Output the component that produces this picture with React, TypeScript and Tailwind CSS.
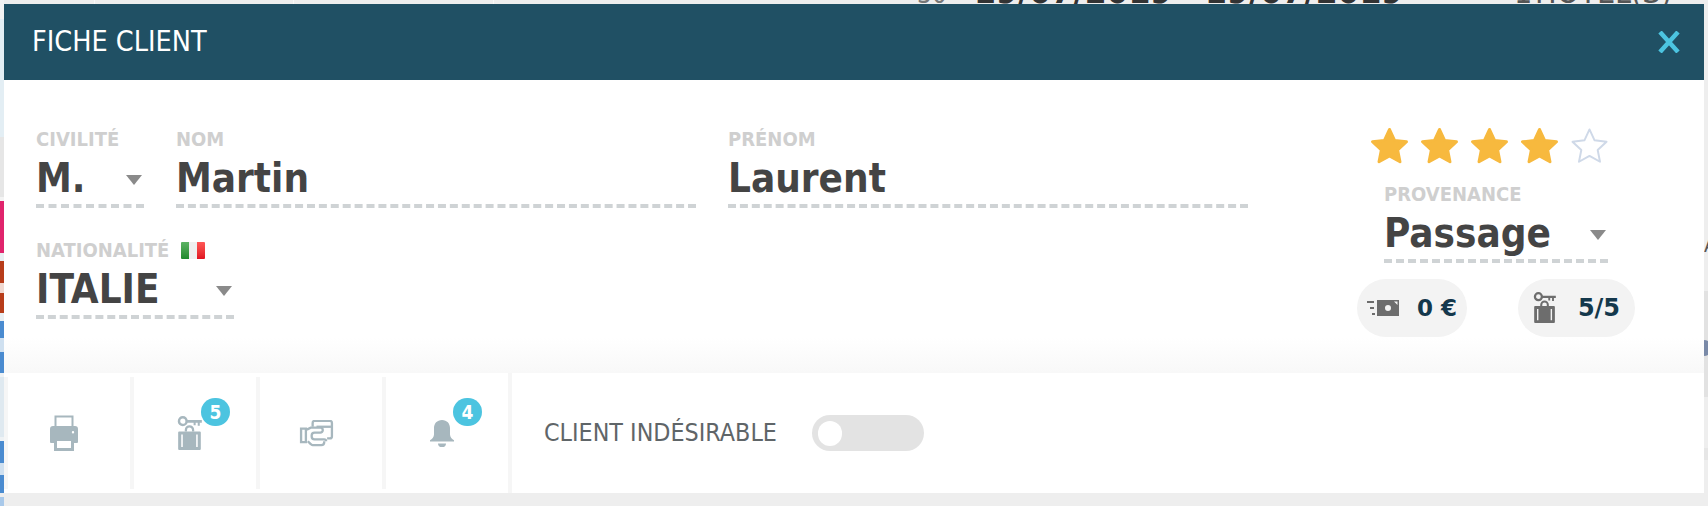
const font = "font-['DejaVu_Sans_Condensed','DejaVu_Sans',sans-serif]";

const leftStrip = [
  { h: "h-[19px]", c: "bg-[#f3f3f3]" },
  { h: "h-[118px]", c: "bg-[#e3eef4]" },
  { h: "h-[60px]", c: "bg-[#e6e6e6]" },
  { h: "h-[4px]", c: "bg-[#f4f4f4]" },
  { h: "h-[52px]", c: "bg-[#e0246c]" },
  { h: "h-[8px]", c: "bg-[#e8eef2]" },
  { h: "h-[22px]", c: "bg-[#b83d1a]" },
  { h: "h-[10px]", c: "bg-[#f0d8d0]" },
  { h: "h-[20px]", c: "bg-[#b83d1a]" },
  { h: "h-[8px]", c: "bg-[#e8eef2]" },
  { h: "h-[17px]", c: "bg-[#4a8bd0]" },
  { h: "h-[14px]", c: "bg-[#cfe0f0]" },
  { h: "h-[21px]", c: "bg-[#4a8bd0]" },
  { h: "h-[4px]", c: "bg-[#eef2f5]" },
  { h: "h-[60px]", c: "bg-[#dfe9f0]" },
  { h: "h-[4px]", c: "bg-[#eef2f5]" },
  { h: "h-[22px]", c: "bg-[#4a8bd0]" },
  { h: "h-[12px]", c: "bg-[#cfe0f0]" },
  { h: "h-[18px]", c: "bg-[#4a8bd0]" },
  { h: "h-[4px]", c: "bg-[#eeeeee]" },
  { h: "h-[9px]", c: "bg-[#a9c9ea]" },
];

function Caret() {
  return (
    <svg width="16" height="10" viewBox="0 0 16 10" className="shrink-0 mt-[3px]">
      <path d="M0 0h16L8 10z" fill="#8a8a8a" />
    </svg>
  );
}

function Field({
  label,
  value,
  width,
  caret,
  flag,
}: {
  label: string;
  value: string;
  width: string;
  caret?: boolean;
  flag?: boolean;
}) {
  return (
    <div className={`${width} shrink-0`}>
      <div className="flex items-center gap-[12px] h-[18px] text-[20px] font-bold leading-none text-[#cfcfcf]">
        {label}
        {flag && <ItalyFlag />}
      </div>
      <div className="flex items-center justify-between h-[60px] pt-[4px] pr-[2px] border-b-[4px] border-dashed border-[#cfd3d5] text-[40px] font-bold leading-none text-[#444444]">
        <span>{value}</span>
        {caret && <Caret />}
      </div>
    </div>
  );
}

function ItalyFlag() {
  return (
    <span className="flex w-[24px] h-[17px] overflow-hidden rounded-[1px]">
      <span className="flex-1 bg-gradient-to-b from-[#5cb364] to-[#1d8a2c]" />
      <span className="flex-1 bg-[#efefef]" />
      <span className="flex-1 bg-gradient-to-b from-[#f55] to-[#e01020]" />
    </span>
  );
}

function Star({ filled }: { filled: boolean }) {
  return (
    <svg width="39" height="37" viewBox="0 0 40 38">
      <path
        d="M20 2.500l5.200 11.200 12.300 1.500-9.100 8.400 2.400 12.100L20 29.700 9.200 35.700l2.400-12.100-9.100-8.400 12.300-1.500z"
        fill={filled ? "#f7b93e" : "#ffffff"}
        stroke={filled ? "#f7b93e" : "#cfd9e8"}
        strokeWidth={filled ? 3 : 2}
        strokeLinejoin="round"
      />
    </svg>
  );
}

function KeyBag({ color, width, height }: { color: string; width: number; height: number }) {
  return (
    <svg width={width} height={height} viewBox="0 0 25 34" className="shrink-0">
      <circle cx="5.500" cy="5" r="3.700" fill="none" stroke={color} strokeWidth="2.400" />
      <path d="M9 4h15v2.500h-2v3h-2v-3h-2v2.500h-2v-2.500H9z" fill={color} />
      <path d="M8.500 15v-1.500a3.500 3.500 0 0 1 7 0V15" fill="none" stroke={color} strokeWidth="2.200" />
      <path
        d="M2 15h20a1 1 0 0 1 1 1v16a1 1 0 0 1-1 1H2a1 1 0 0 1-1-1V16a1 1 0 0 1 1-1zm2 3v12h1.500V18zm14.500 0v12H20V18z"
        fill={color}
        fillRule="evenodd"
      />
    </svg>
  );
}

function CashIcon() {
  return (
    <svg width="32" height="16" viewBox="0 0 32 16" className="shrink-0">
      <path d="M0 1h7v2H0zM3 7h4v2H3zM5 13h3v2H5z" fill="#6d6d6d" />
      <path
        d="M10 0h22v16H10zm11 5a3 3 0 1 0 0 6 3 3 0 0 0 0-6zM27 1.500l3.500 3.500V1.500z"
        fill="#6d6d6d"
        fillRule="evenodd"
      />
    </svg>
  );
}

function Pill({ children, width, gap, text }: { children: React.ReactNode; width: string; gap: string; text: string }) {
  return (
    <div className={`${width} ${gap} ${text} h-[58px] flex items-center justify-center rounded-[29px] bg-[#f3f3f3] font-['DejaVu_Sans',sans-serif] font-bold text-[#14384c]`}>
      {children}
    </div>
  );
}

function PrinterIcon() {
  return (
    <svg width="30" height="36" viewBox="0 0 28 36">
      <path d="M5.500 13V1.500h17V13" fill="none" stroke="#a7b7be" strokeWidth="2" />
      <path
        d="M3 11h22a3 3 0 0 1 3 3v13a1 1 0 0 1-1 1h-3v8H4v-8H1a1 1 0 0 1-1-1V14a3 3 0 0 1 3-3zm4 15v7h14v-7zm16-10a1.200 1.200 0 1 0 0 2.400 1.200 1.200 0 0 0 0-2.400z"
        fill="#a7b7be"
        fillRule="evenodd"
      />
    </svg>
  );
}

function CardsIcon() {
  return (
    <svg width="35" height="27" viewBox="0 0 34 28" fill="none" stroke="#a7b7be" strokeWidth="2.400">
      <path d="M13 7V3a2 2 0 0 1 2-2h16a2 2 0 0 1 2 2v14a2 2 0 0 1-2 2h-3" />
      <path d="M17 7h15" />
      <path d="M7 10l4-2h10a2.500 2.500 0 0 1 0 5h-6a3 3 0 0 0-3 3v1a3 3 0 0 0 3 3h10a2 2 0 0 1 2 2" />
      <path d="M1 9h5v14H1zM8 22l3 3a3 3 0 0 0 2 1h9a3 3 0 0 0 3-3v-1" />
    </svg>
  );
}

function BellIcon() {
  return (
    <svg width="26" height="27" viewBox="0 0 26 30" preserveAspectRatio="none">
      <path d="M13 0c5 0 8 4 8 9v7c0 3 2 5 4 6.500V24H1v-1.500c2-1.500 4-3.500 4-6.500V9c0-5 3-9 8-9z" fill="#a7b7be" />
      <path d="M9 26h8a4 4 0 0 1-8 0z" fill="#a7b7be" />
    </svg>
  );
}

function Badge({ n }: { n: number }) {
  return (
    <span className="absolute left-[67px] top-[21px] w-[29px] h-[28px] rounded-full bg-[#4cc4e0] text-white text-[19px] font-bold flex items-center justify-center">
      {n}
    </span>
  );
}

function ToolCell({ children, tall }: { children: React.ReactNode; tall?: boolean }) {
  return (
    <div className={`relative w-[126px] shrink-0 pr-[10px] flex items-center justify-center border-r-[4px] border-[#f6f6f6] ${tall ? "" : "my-[4px]"}`}>
      {children}
    </div>
  );
}

export default function App() {
  return (
    <div className={`w-[1708px] h-[506px] overflow-hidden flex bg-[#eeeeee] ${font}`}>
      <div className="w-[4px] shrink-0 flex flex-col">
        {leftStrip.map((s, i) => (
          <div key={i} className={`${s.h} ${s.c}`} />
        ))}
      </div>

      <div className="w-[1700px] shrink-0 flex flex-col">
        {/* what sticks out above the modal */}
        <div className="h-[4px] shrink-0 overflow-hidden bg-[#eeeeee] relative">
          <span className="absolute left-[90px] top-0 w-[1px] h-[4px] bg-[#f8f8f8]" />
          <span className="absolute left-[289px] top-0 w-[1px] h-[4px] bg-[#f8f8f8]" />
          <span className="absolute left-[489px] top-0 w-[1px] h-[4px] bg-[#f8f8f8]" />
          <div className="absolute left-[913px] bottom-[-5px] flex items-baseline h-[35px] leading-[35px] text-[#333333]">
            <span className="w-[57px] text-[#777777] text-[26px]">30</span>
            <span className="w-[231px] text-[35px] font-bold">19/07/2019</span>
            <span className="w-[309px] text-[35px] font-bold">19/07/2019</span>
            <span className="w-[21px] text-[#555555] text-[32px]">1</span>
            <span className="text-[#555555] text-[32px]">HOTEL(S)</span>
          </div>
        </div>

        <div className="h-[76px] shrink-0 bg-[#205064] flex items-center justify-between pl-[28px] pr-[24px]">
          <h1 className="text-[28.500px] font-normal text-white">FICHE CLIENT</h1>
          <svg width="22" height="22" viewBox="0 0 22 22">
            <path d="M2 1l18 20M20 1L2 21" stroke="#4cc4e0" strokeWidth="4.500" />
          </svg>
        </div>

        <div className="h-[293px] shrink-0 flex bg-gradient-to-b from-white from-[88%] to-[#f8f8f8] pl-[32px] pr-[69px] pt-[47px]">
          <div className="flex-1 flex flex-col gap-[33px] pt-[3px]">
            <div className="flex gap-[32px]">
              <Field label="CIVILITÉ" value="M." width="w-[108px]" caret />
              <Field label="NOM" value="Martin" width="w-[520px]" />
              <Field label="PRÉNOM" value="Laurent" width="w-[520px]" />
            </div>
            <Field label="NATIONALITÉ" value="ITALIE" width="w-[198px]" caret flag />
          </div>

          <div className="w-[278px] shrink-0 flex flex-col">
            <div className="flex gap-[11px] ml-[13px]">
              {[0, 1, 2, 3].map((i) => (
                <Star key={i} filled />
              ))}
              <Star filled={false} />
            </div>
            <div className="mt-[21px] ml-[27px]">
              <Field label="PROVENANCE" value="Passage" width="w-[224px]" caret />
            </div>
            <div className="mt-[16px] flex gap-[51px]">
              <Pill width="w-[110px]" gap="gap-[18px]" text="text-[23px]">
                <CashIcon />
                <span>0 €</span>
              </Pill>
              <Pill width="w-[117px]" gap="gap-[21px]" text="text-[24px]">
                <KeyBag color="#6d6d6d" width={24} height={32} />
                <span>5/5</span>
              </Pill>
            </div>
          </div>
        </div>

        <div className="h-[120px] shrink-0 bg-white flex">
          <div className="w-[4px] shrink-0 my-[4px] bg-[#f6f6f6]" />
          <ToolCell>
            <PrinterIcon />
          </ToolCell>
          <ToolCell>
            <KeyBag color="#a7b7be" width={26} height={35} />
            <Badge n={5} />
          </ToolCell>
          <ToolCell>
            <CardsIcon />
          </ToolCell>
          <ToolCell tall>
            <BellIcon />
            <span className="absolute left-[67px] top-[25px] w-[29px] h-[28px] rounded-full bg-[#4cc4e0] text-white text-[19px] font-bold flex items-center justify-center">
              4
            </span>
          </ToolCell>
          <div className="flex items-center pl-[32px] gap-[35px]">
            <span className="text-[24.800px] text-[#5f6568]">CLIENT INDÉSIRABLE</span>
            <div className="w-[112px] h-[36px] rounded-[18px] bg-[#e3e3e3] flex items-center pl-[6px]">
              <span className="w-[24px] h-[25px] rounded-full bg-white" />
            </div>
          </div>
        </div>
      </div>

      <div className="w-[4px] shrink-0 overflow-hidden flex flex-col bg-[#eeeeee]">
        <div className="h-[235px] shrink-0" />
        <div className="h-[20px] shrink-0 text-[20px] leading-[20px] text-[#555555] overflow-hidden">A</div>
        <div className="h-[36px] shrink-0" />
        <div className="h-[106px] shrink-0 bg-[#e2e2e2] pt-[49px]">
          <div className="w-[16px] h-[16px] -ml-[8px] rounded-full bg-[#7a8aa8]" />
        </div>
        <div className="h-[51px] shrink-0" />
        <div className="h-[12px] shrink-0 bg-[#e6e6e6]" />
      </div>
    </div>
  );
}
